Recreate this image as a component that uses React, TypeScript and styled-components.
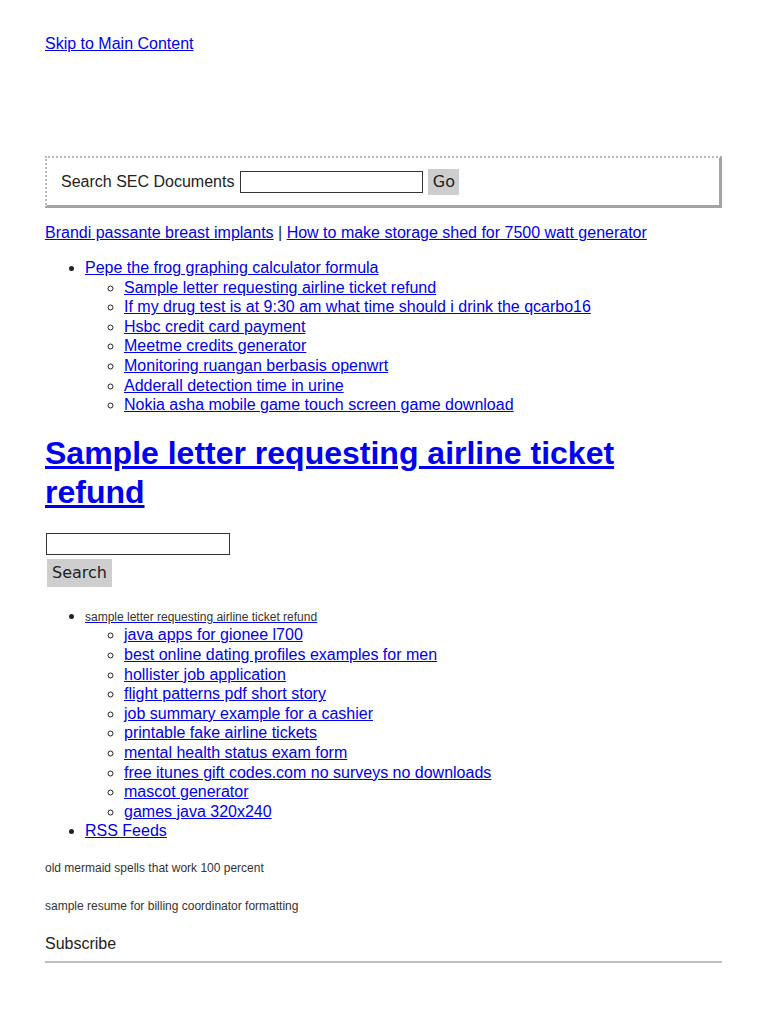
import React from "react";
import styled, { createGlobalStyle } from "styled-components";

const GlobalStyle = createGlobalStyle`
  body {
    margin: 0;
    background: #ffffff;
    font-family: "Liberation Sans", Arial, sans-serif;
    color: #222222;
  }
`;

const Page = styled.div`
  padding: 34px 48px 40px 45px;
`;

const Link = styled.a`
  color: #0000ee;
  text-decoration: underline;
  font-size: 16px;
  line-height: inherit;
`;

const SkipLine = styled.div`
  height: 20px;
  line-height: 20px;
`;

const SearchPanel = styled.form`
  margin-top: 102px;
  height: 47px;
  display: flex;
  align-items: center;
  gap: 6px;
  padding: 0 0 0 14px;
  border-top: 2px dotted #b8b8b8;
  border-left: 2px dotted #b8b8b8;
  border-right: 3px solid #a4a4a4;
  border-bottom: 3px solid #a4a4a4;
  font-size: 16px;
`;

const Label = styled.label`
  color: #222222;
  line-height: 20px;
`;

const TextInput = styled.input<{ $w: number }>`
  box-sizing: border-box;
  width: ${(p) => p.$w}px;
  height: 22px;
  border: 1px solid #333333;
  padding: 0 4px;
  margin: 0;
  background: #ffffff;
`;

const GreyButton = styled.button<{ $size: number }>`
  box-sizing: border-box;
  margin: 0;
  border: none;
  padding: 0 4px;
  font-family: "DejaVu Sans", sans-serif;
  font-size: ${(p) => p.$size}px;
  color: #222222;
  background-color: #dcdcdc;
  background-image: radial-gradient(#bdbdbd 0.6px, transparent 0.8px);
  background-size: 2px 2px;
`;

const GoButton = styled(GreyButton)`
  height: 26px;
  width: 31px;
  margin-left: -1px;
`;

const TopLinks = styled.p`
  margin: 15px 0 0;
  font-size: 16px;
  line-height: 20px;
  color: #222222;
`;

const List = styled.ul<{ $top: number }>`
  margin: ${(p) => p.$top}px 0 0;
  padding-left: 40px;
  list-style: disc;
`;

const SubList = styled.ul`
  margin: 0;
  padding-left: 39px;
  list-style: circle;
`;

const Item = styled.li`
  font-size: 16px;
  line-height: 19.6px;
`;

const Heading = styled.h1`
  margin: 19px 0 0;
  font-size: 32px;
  line-height: 39px;
  font-weight: bold;

  a {
    color: #0000ee;
    text-decoration: underline;
  }
`;

const SearchForm = styled.form`
  margin-top: 21px;
  display: flex;
  flex-direction: column;
  align-items: flex-start;
  gap: 4px;
  padding-left: 1px;
`;

const SearchButton = styled(GreyButton)`
  height: 28px;
  padding: 0 5px;
  margin-left: 1px;
`;

const SmallLink = styled.a`
  font-size: 12px;
  line-height: 16px;
  color: #333333;
  text-decoration: underline;
  text-decoration-color: #0000ee;
`;

const Note = styled.p<{ $top: number }>`
  margin: ${(p) => p.$top}px 0 0;
  font-size: 12px;
  line-height: 16px;
  color: #333333;
`;

const Subscribe = styled.h3`
  margin: 20px 0 0;
  font-size: 16px;
  line-height: 20px;
  font-weight: normal;
  color: #222222;
`;

const Rule = styled.div`
  margin-top: 7px;
  height: 2px;
  background: #bdbdc2;
`;

const sidebar = [
  "Sample letter requesting airline ticket refund",
  "If my drug test is at 9:30 am what time should i drink the qcarbo16",
  "Hsbc credit card payment",
  "Meetme credits generator",
  "Monitoring ruangan berbasis openwrt",
  "Adderall detection time in urine",
  "Nokia asha mobile game touch screen game download",
];

const related = [
  "java apps for gionee l700",
  "best online dating profiles examples for men",
  "hollister job application",
  "flight patterns pdf short story",
  "job summary example for a cashier",
  "printable fake airline tickets",
  "mental health status exam form",
  "free itunes gift codes.com no surveys no downloads",
  "mascot generator",
  "games java 320x240",
];

export default function App() {
  return (
    <>
      <GlobalStyle />
      <Page>
        <SkipLine>
          <Link href="#main">Skip to Main Content</Link>
        </SkipLine>

        <SearchPanel onSubmit={(e) => e.preventDefault()}>
          <Label htmlFor="sec">Search SEC Documents</Label>
          <TextInput id="sec" $w={183} />
          <GoButton $size={16}>Go</GoButton>
        </SearchPanel>

        <TopLinks>
          <Link href="#">Brandi passante breast implants</Link> |{" "}
          <Link href="#">How to make storage shed for 7500 watt generator</Link>
        </TopLinks>

        <List $top={15}>
          <Item>
            <Link href="#">Pepe the frog graphing calculator formula</Link>
            <SubList>
              {sidebar.map((t) => (
                <Item key={t}>
                  <Link href="#">{t}</Link>
                </Item>
              ))}
            </SubList>
          </Item>
        </List>

        <Heading id="main">
          <a href="#">Sample letter requesting airline ticket refund</a>
        </Heading>

        <SearchForm onSubmit={(e) => e.preventDefault()}>
          <TextInput $w={184} />
          <SearchButton $size={16}>Search</SearchButton>
        </SearchForm>

        <List $top={19}>
          <Item>
            <SmallLink href="#">sample letter requesting airline ticket refund </SmallLink>
            <SubList>
              {related.map((t) => (
                <Item key={t}>
                  <Link href="#">{t}</Link>
                </Item>
              ))}
            </SubList>
          </Item>
          <Item>
            <Link href="#">RSS Feeds</Link>
          </Item>
        </List>

        <Note $top={19}>old mermaid spells that work 100 percent</Note>
        <Note $top={22}>sample resume for billing coordinator formatting</Note>

        <Subscribe>Subscribe</Subscribe>
        <Rule />
      </Page>
    </>
  );
}
